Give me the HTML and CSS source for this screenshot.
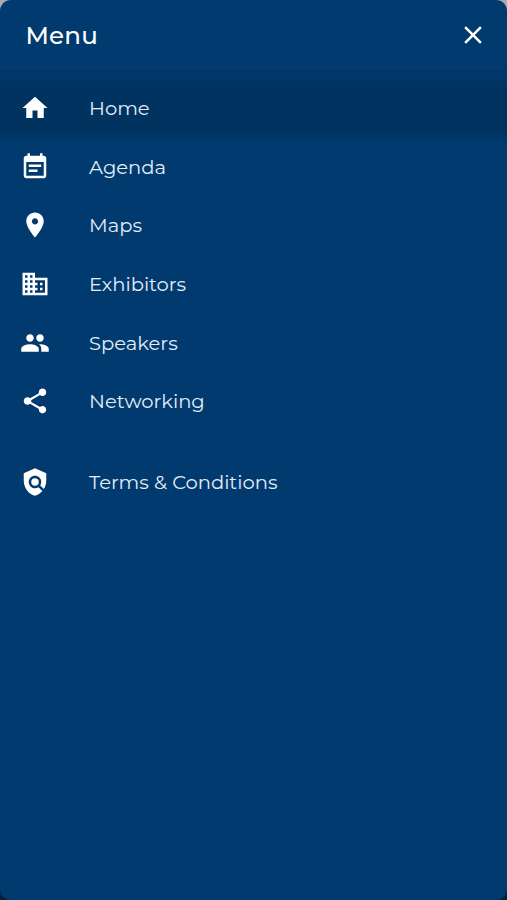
FILE: index.html
```html
<!DOCTYPE html>
<html lang="en">
<head>
<meta charset="utf-8">
<title>Menu</title>
<link rel="stylesheet" href="styles.css">
</head>
<body>
<div class="drawer">
  <header class="header">
    <h1 class="title">Menu</h1>
    <button class="close" aria-label="Close"><svg viewBox="0 0 24 24"><path d="M19 6.41L17.59 5 12 10.59 6.41 5 5 6.41 10.59 12 5 17.59 6.41 19 12 13.41 17.59 19 19 17.59 13.41 12z"/></svg></button>
  </header>
  <nav class="nav">
    <a class="item active"><svg viewBox="0 0 24 24"><path d="M10 20v-6h4v6h5v-8h3L12 3 2 12h3v8z"/></svg><span>Home</span></a>
    <a class="item"><svg viewBox="0 0 24 24"><path d="M17 10H7v2h10v-2zm2-7h-1V1h-2v2H8V1H6v2H5c-1.11 0-2 .9-2 2v14c0 1.1.89 2 2 2h14c1.1 0 2-.9 2-2V5c0-1.1-.9-2-2-2zm0 16H5V8h14v11zm-5-5H7v2h7v-2z"/></svg><span>Agenda</span></a>
    <a class="item"><svg viewBox="0 0 24 24"><path d="M12 2C8.13 2 5 5.13 5 9c0 5.250 7 13 7 13s7-7.750 7-13c0-3.870-3.130-7-7-7zm0 9.500c-1.380 0-2.500-1.120-2.500-2.500s1.120-2.500 2.500-2.500 2.500 1.120 2.500 2.500-1.120 2.500-2.500 2.500z"/></svg><span>Maps</span></a>
    <a class="item"><svg viewBox="0 0 24 24"><path d="M12 7V3H2v18h20V7H12zM6 19H4v-2h2v2zm0-4H4v-2h2v2zm0-4H4V9h2v2zm0-4H4V5h2v2zm4 12H8v-2h2v2zm0-4H8v-2h2v2zm0-4H8V9h2v2zm0-4H8V5h2v2zm10 12h-8v-2h2v-2h-2v-2h2v-2h-2V9h8v10zm-2-8h-2v2h2v-2zm0 4h-2v2h2v-2z"/></svg><span>Exhibitors</span></a>
    <a class="item"><svg viewBox="0 0 24 24"><path d="M16 11c1.660 0 2.990-1.340 2.990-3S17.660 5 16 5c-1.660 0-3 1.340-3 3s1.340 3 3 3zm-8 0c1.660 0 2.990-1.340 2.990-3S9.660 5 8 5C6.340 5 5 6.340 5 8s1.340 3 3 3zm0 2c-2.330 0-7 1.170-7 3.500V19h14v-2.500c0-2.330-4.670-3.500-7-3.500zm8 0c-.29 0-.62.020-.970.050 1.160.84 1.970 1.970 1.970 3.450V19h6v-2.500c0-2.330-4.670-3.500-7-3.500z"/></svg><span>Speakers</span></a>
    <a class="item"><svg viewBox="0 0 24 24"><path d="M18 16.080c-.76 0-1.440.3-1.960.77L8.910 12.700c.05-.23.090-.46.090-.7s-.04-.47-.09-.7l7.050-4.110c.54.5 1.250.81 2.040.81 1.660 0 3-1.340 3-3s-1.340-3-3-3-3 1.340-3 3c0 .24.040.47.090.7L8.040 9.810C7.500 9.310 6.790 9 6 9c-1.660 0-3 1.340-3 3s1.340 3 3 3c.79 0 1.500-.31 2.040-.81l7.120 4.160c-.05.21-.08.43-.08.650 0 1.610 1.310 2.920 2.920 2.920 1.610 0 2.920-1.310 2.920-2.920s-1.310-2.920-2.920-2.920z"/></svg><span>Networking</span></a>
    <a class="item terms-item"><svg viewBox="0 0 24 24"><path d="M21 5l-9-4-9 4v6c0 5.550 3.840 10.740 9 12 2.300-.56 4.330-1.900 5.880-3.710l-3.120-3.120c-1.940 1.290-4.580 1.070-6.290-.64-1.950-1.950-1.950-5.120 0-7.070 1.950-1.950 5.120-1.950 7.070 0 1.710 1.710 1.920 4.350.64 6.290l2.900 2.900C20.290 15.690 21 13.380 21 11V5z"/><circle cx="12" cy="12" r="3"/></svg><span>Terms &amp; Conditions</span></a>
  </nav>
</div>
</body>
</html>
```
FILE: styles.css
```css
* { box-sizing: border-box; }
body {
  margin: 0;
  height: 900px;
  overflow: hidden;
  background: linear-gradient(#aaa 0 50%, #05213f 50%);
  font-family: Montserrat, Inter, sans-serif;
  color: #fff;
}
.drawer {
  height: 900px;
  border-radius: 11px;
  overflow: hidden;
  background: #003a6f;
}
.header {
  height: 70px;
  padding: 0 19px 0 25.5px;
  display: flex;
  align-items: center;
  justify-content: space-between;
  box-shadow: 0 0 5px rgba(0, 25, 55, .35);
}
.title {
  margin: 0;
  font-size: 24.5px;
  font-weight: 500;
  line-height: 30px;
  letter-spacing: .2px;
}
.close {
  width: 30px;
  height: 30px;
  padding: 0;
  border: 0;
  background: none;
}
svg { display: block; width: 30px; height: 30px; fill: #fff; flex: none; }
.nav { padding-top: 9px; }
.item {
  height: 58.6px;
  padding-left: 20px;
  display: flex;
  align-items: center;
  gap: 39px;
  font-size: 19.55px;
  line-height: 28px;
  color: #e3edf8;
  white-space: nowrap;
}
.active { background: linear-gradient(#003768, #003360 10px calc(100% - 6px), #003768); box-shadow: 0 0 5px #003768; }
.terms-item { margin-top: 22.500px; }
```
